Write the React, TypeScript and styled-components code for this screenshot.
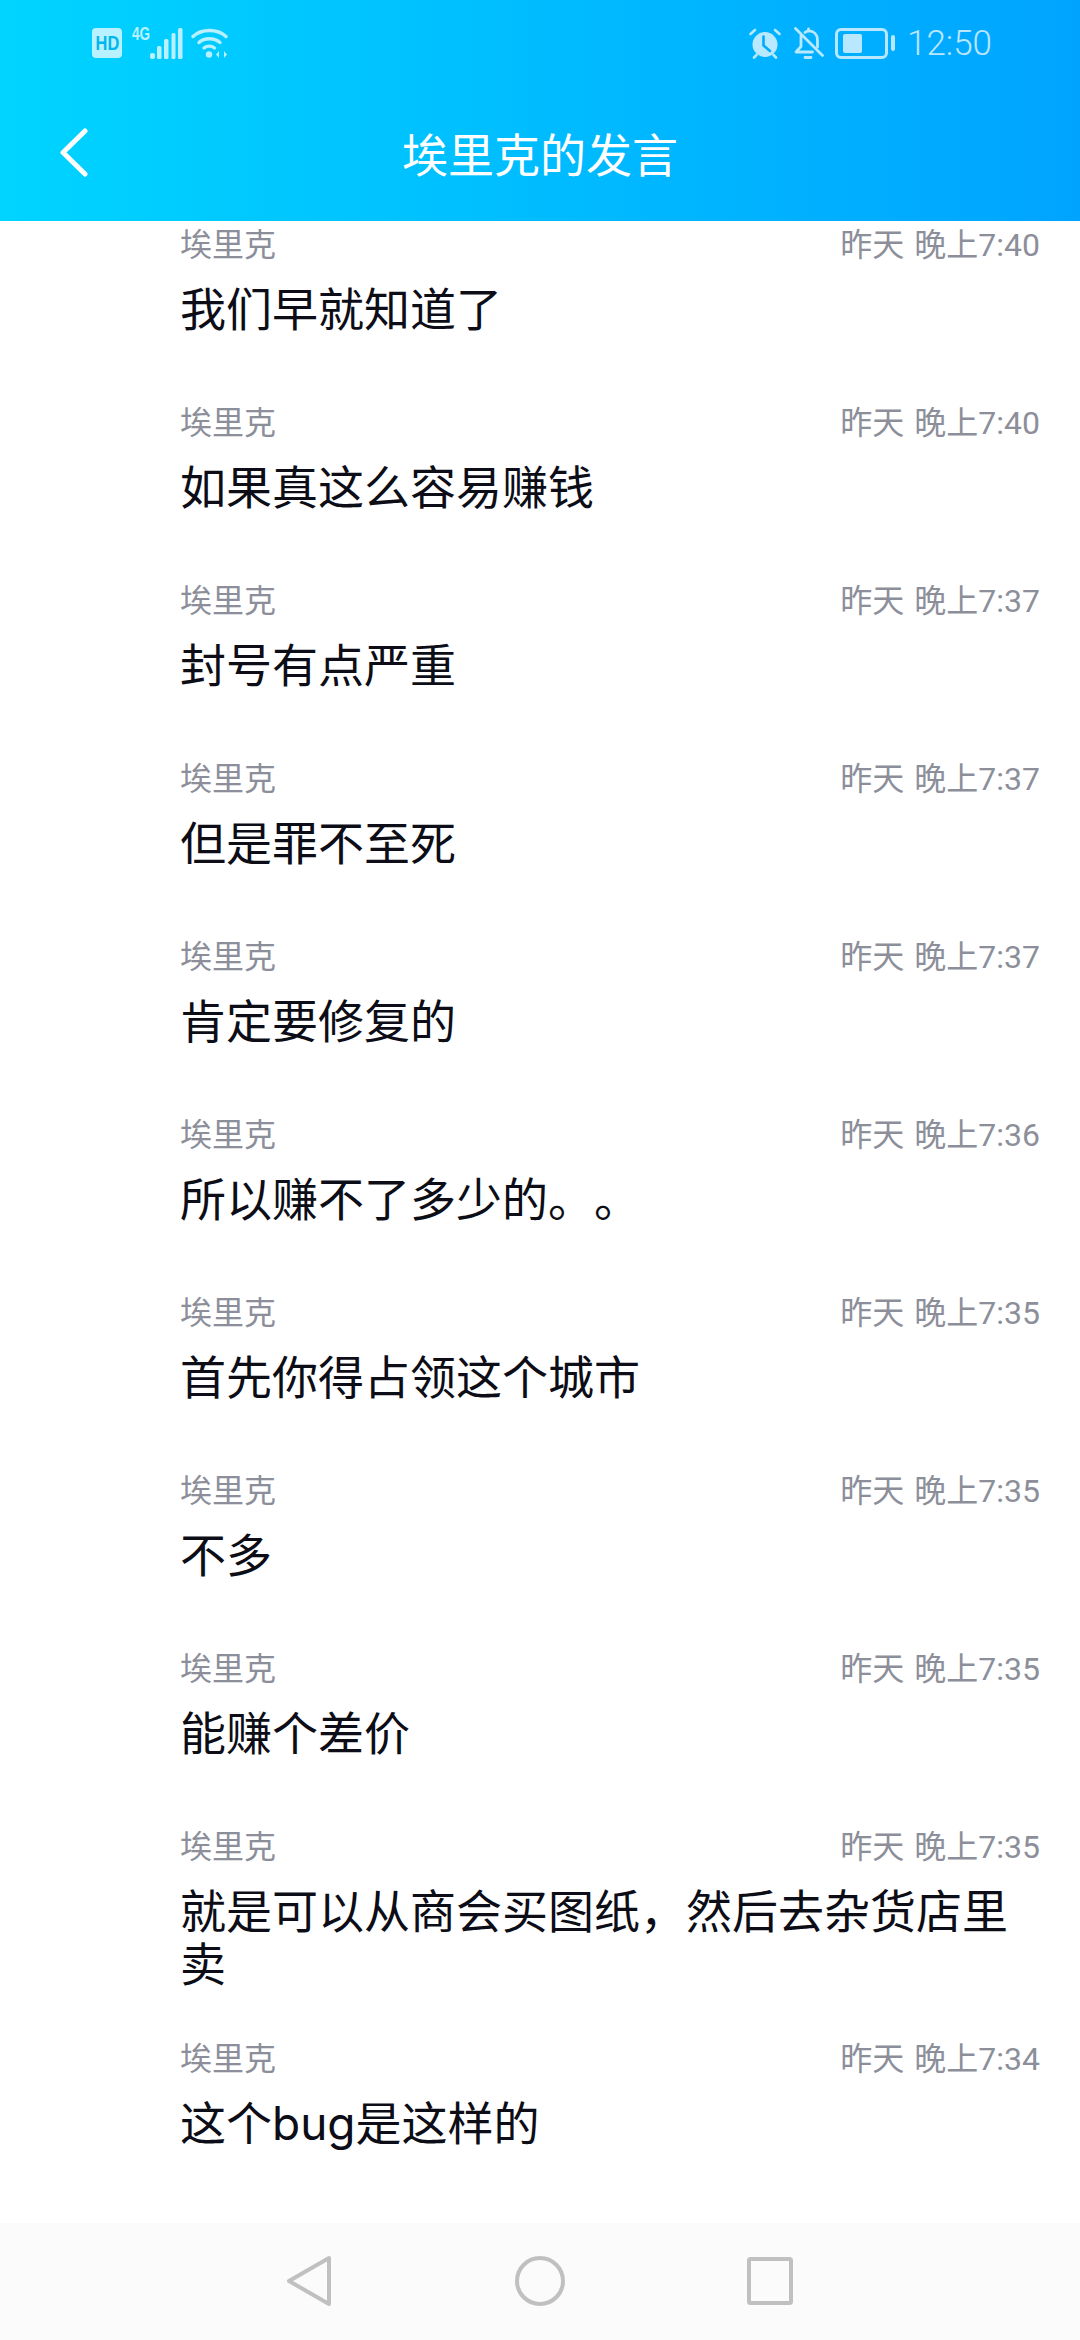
import React from "react";
import styled, { createGlobalStyle } from "styled-components";

interface IMessage {
  time: string;
  text: string;
}

const messages: IMessage[] = [
  { time: "昨天 晚上7:40", text: "我们早就知道了" },
  { time: "昨天 晚上7:40", text: "如果真这么容易赚钱" },
  { time: "昨天 晚上7:37", text: "封号有点严重" },
  { time: "昨天 晚上7:37", text: "但是罪不至死" },
  { time: "昨天 晚上7:37", text: "肯定要修复的" },
  { time: "昨天 晚上7:36", text: "所以赚不了多少的。。" },
  { time: "昨天 晚上7:35", text: "首先你得占领这个城市" },
  { time: "昨天 晚上7:35", text: "不多" },
  { time: "昨天 晚上7:35", text: "能赚个差价" },
  { time: "昨天 晚上7:35", text: "就是可以从商会买图纸，然后去杂货店里卖" },
  { time: "昨天 晚上7:34", text: "这个bug是这样的" },
];

export default function App(): React.ReactElement {
  return (
    <Page>
      <GlobalStyle />
      <Header>
        <StatusBar>
          <StatusGroup>
            <HdBadge>
              <HdText>HD</HdText>
            </HdBadge>
            <Signal>
              <NetworkLabel>4G</NetworkLabel>
              <svg width="33" height="31" viewBox="0 0 33 31" fill="#fff">
                <rect x="0" y="25" width="5" height="6" rx="2" />
                <rect x="7" y="18" width="4.500" height="13" rx="1.500" />
                <rect x="14" y="11" width="4.500" height="20" rx="1.500" />
                <rect x="21.500" y="5" width="4" height="26" rx="1.500" />
                <rect x="28" y="0" width="4.500" height="31" rx="1.500" />
              </svg>
            </Signal>
            <WifiIcon width="38" height="31" viewBox="0 0 38 31" fill="none" stroke="#fff" strokeWidth="3.400" strokeLinecap="round">
              <path d="M2 8.500C10.500 0.500 26.500 0.500 35 8.500" />
              <path d="M8 14.500C13.500 9.500 23 9.500 29 14.500" />
              <path d="M13 20C16 17.500 20.500 17.500 23.500 20" />
              <circle cx="18" cy="26.500" r="3.200" fill="#fff" stroke="none" />
              <path d="M28 30v-7l-3 3.500zM33 23v7l3-3.500z" fill="#fff" stroke="none" />
            </WifiIcon>
          </StatusGroup>
          <StatusGroup>
            <AlarmIcon width="32" height="31" viewBox="0 0 32 31">
              <circle cx="16" cy="16.500" r="12.500" fill="#fff" />
              <path d="M1.500 6L6 2M30.500 6L26 2" stroke="#fff" strokeWidth="2.600" strokeLinecap="round" />
              <path d="M5 29.500l2.500-2.500M27 29.500l-2.500-2.500" stroke="#fff" strokeWidth="2.600" strokeLinecap="round" />
              <path d="M14.500 8.500v9l6.500 5.500" fill="none" stroke="#00a9ff" strokeWidth="2.600" strokeLinecap="round" />
            </AlarmIcon>
            <BellIcon width="30" height="32" viewBox="0 0 30 32" fill="none" stroke="#fff" strokeWidth="2.800" strokeLinecap="round" strokeLinejoin="round">
              <path d="M7 9v10.500L2 25H18.500" />
              <path d="M11 5.500C12 4.500 13 4 14.500 3.800V2M14.500 3.800C20 4 23.500 7.500 23.500 13V20" />
              <path d="M1.500 1.500L28.500 28.500" />
              <path d="M11 30.500H17" />
            </BellIcon>
            <Battery>
              <BatteryBody>
                <BatteryLevel />
              </BatteryBody>
              <BatteryTip />
            </Battery>
            <Clock>12:50</Clock>
          </StatusGroup>
        </StatusBar>
        <Toolbar>
          <BackIcon width="30" height="49" viewBox="0 0 30 49" fill="none" stroke="#fff" strokeWidth="5" strokeLinecap="round" strokeLinejoin="round">
            <path d="M26 3L4 24.500L26 46" />
          </BackIcon>
          <Title>埃里克的发言</Title>
        </Toolbar>
      </Header>
      <List>
        {messages.map((m, i) => (
          <Row key={i}>
            <Meta>
              <span>埃里克</span>
              <Time>{m.time}</Time>
            </Meta>
            <Body>{m.text}</Body>
          </Row>
        ))}
      </List>
      <NavBar>
        <svg width="47" height="52" viewBox="0 0 47 52" fill="none" stroke="#c0c0c0" strokeWidth="4" strokeLinejoin="round">
          <path d="M43 3V49L3 26Z" />
        </svg>
        <svg width="52" height="52" viewBox="0 0 52 52" fill="none" stroke="#c0c0c0" strokeWidth="4">
          <circle cx="26" cy="26" r="23" />
        </svg>
        <svg width="46" height="48" viewBox="0 0 46 48" fill="none" stroke="#c0c0c0" strokeWidth="4" strokeLinejoin="round">
          <rect x="2" y="2" width="42" height="44" rx="1.500" />
        </svg>
      </NavBar>
    </Page>
  );
}

const GlobalStyle = createGlobalStyle`
  html, body {
    margin: 0;
    padding: 0;
    background: #fff;
  }
`;

const Page = styled.div`
  width: 1080px;
  height: 2340px;
  display: flex;
  flex-direction: column;
  overflow: hidden;
  font-family: Roboto, "Noto Sans CJK SC", sans-serif;
  background: #fff;
  text-spacing-trim: space-all;
`;

const Header = styled.header`
  height: 221px;
  flex: none;
  display: flex;
  flex-direction: column;
  background: linear-gradient(90deg, #00d4ff 0%, #00a4ff 100%);
`;

const StatusBar = styled.div`
  height: 86px;
  padding: 0 88px 0 92px;
  display: flex;
  align-items: center;
  justify-content: space-between;
  opacity: 0.72;
`;

const StatusGroup = styled.div`
  display: flex;
  align-items: center;
`;

const HdBadge = styled.span`
  width: 30px;
  height: 30px;
  border-radius: 4px;
  background: #fff;
  display: flex;
  align-items: center;
  justify-content: center;
`;

const HdText = styled.span`
  color: #00aee8;
  font: 700 20px/30px "Liberation Sans", sans-serif;
  transform: scaleX(0.82);
`;

const Signal = styled.div`
  position: relative;
  margin-left: 28px;
  display: flex;
`;

const NetworkLabel = styled.span`
  position: absolute;
  left: -18px;
  top: -3px;
  color: #fff;
  font: 700 18px/18px "Liberation Sans", sans-serif;
  transform: scaleX(0.75);
  transform-origin: left center;
`;

const WifiIcon = styled.svg`
  margin-left: 8px;
`;

const AlarmIcon = styled.svg`
  display: block;
`;

const BellIcon = styled.svg`
  display: block;
  margin-left: 13px;
`;

const Battery = styled.div`
  margin-left: 11px;
  display: flex;
  align-items: center;
  gap: 3px;
`;

const BatteryBody = styled.div`
  box-sizing: border-box;
  width: 53px;
  height: 31px;
  padding: 3px 5px;
  border: 3px solid #fff;
  border-radius: 6px;
`;

const BatteryLevel = styled.div`
  width: 19px;
  height: 100%;
  background: #fff;
  border-radius: 2px;
`;

const BatteryTip = styled.div`
  width: 4px;
  height: 16px;
  background: #fff;
  border-radius: 2px;
`;

const Clock = styled.span`
  margin: 2px 0 0 12px;
  color: #fff;
  font-size: 35px;
  font-weight: 300;
  line-height: 40px;
`;

const Toolbar = styled.div`
  flex: 1;
  display: grid;
  grid-template-columns: 1fr auto 1fr;
  align-items: center;
  padding-bottom: 2px;
  padding-left: 59px;
`;

const BackIcon = styled.svg`
  display: block;
`;

const Title = styled.h1`
  margin: 6px 0 0 -59px;
  color: #fff;
  font-size: 46px;
  font-weight: 400;
  line-height: 60px;
`;

const List = styled.main`
  flex: 1;
  min-height: 0;
  display: flex;
  flex-direction: column;
  padding: 1px 40px 0 180px;
`;

const Row = styled.article`
  box-sizing: border-box;
  min-height: 178px;
  padding-bottom: 45px;
`;

const Meta = styled.div`
  display: flex;
  justify-content: space-between;
  align-items: center;
  height: 40px;
  margin-bottom: 21px;
  color: #8c8f9a;
  font-size: 32px;
`;

const Time = styled.span`
  word-spacing: 2px;
`;

const Body = styled.p`
  margin: 0;
  color: #0c0d16;
  font-family: Inter, "Noto Sans CJK SC", sans-serif;
  font-size: 46px;
  line-height: 53px;
`;

const NavBar = styled.nav`
  height: 117px;
  flex: none;
  box-sizing: border-box;
  display: flex;
  align-items: center;
  padding: 0 287px 2px 286px;
  justify-content: space-between;
  background: #fbfbfb;
`;
